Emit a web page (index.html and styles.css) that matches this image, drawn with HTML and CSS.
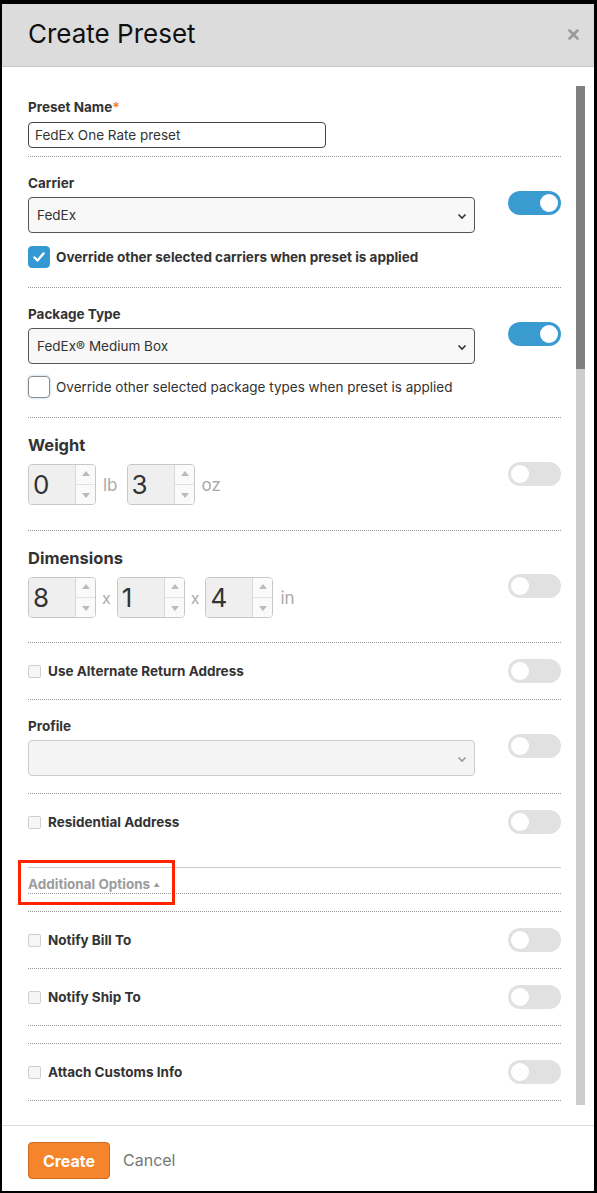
FILE: index.html
```html
<!DOCTYPE html>
<html lang="en">

<head>
    <meta charset="UTF-8">
    <title>Create Preset</title>
    <link rel="stylesheet" href="styles.css">
</head>

<body>
    <div class="modal">
        <div class="modal_head">
            <h1>Create Preset</h1>
            <svg class="close" width="11" height="11" viewBox="0 0 11 11">
                <path d="M1.5 1.5 L9.5 9.5 M9.5 1.5 L1.5 9.5" stroke="#9a9a9a" stroke-width="2.6" stroke-linecap="round" />
            </svg>
        </div>

        <div class="modal_body">
            <div class="form">
                <!-- preset name -->
                <div class="row first">
                    <div class="main">
                        <div class="label">Preset Name<span class="req">*</span></div>
                        <input type="text" class="text_in" value="FedEx One Rate preset">
                    </div>
                </div>

                <!-- carrier -->
                <div class="row">
                    <div class="main">
                        <div class="label">Carrier</div>
                        <div class="select">
                            <span>FedEx</span>
                            <svg width="10" height="7" viewBox="0 0 10 7"><path d="M1.5 1.5 L5 5 L8.5 1.5" fill="none" stroke="#333" stroke-width="1.6" /></svg>
                        </div>
                        <div class="check_row">
                            <span class="cb big checked">
                                <svg width="22" height="22" viewBox="0 0 22 22"><path d="M6.5 11.5 L9.5 14.5 L15.5 7.5" fill="none" stroke="#fff" stroke-width="2.4" stroke-linecap="round" stroke-linejoin="round" /></svg>
                            </span>
                            <span class="cb_text bold">Override other selected carriers when preset is applied</span>
                        </div>
                    </div>
                    <span class="toggle on t16"><span class="knob"></span></span>
                </div>

                <!-- package type -->
                <div class="row">
                    <div class="main">
                        <div class="label">Package Type</div>
                        <div class="select pkg">
                            <span>FedEx® Medium Box</span>
                            <svg width="10" height="7" viewBox="0 0 10 7"><path d="M1.5 1.5 L5 5 L8.5 1.5" fill="none" stroke="#333" stroke-width="1.6" /></svg>
                        </div>
                        <div class="check_row">
                            <span class="cb big"></span>
                            <span class="cb_text">Override other selected package types when preset is applied</span>
                        </div>
                    </div>
                    <span class="toggle on t16"><span class="knob"></span></span>
                </div>

                <!-- weight -->
                <div class="row big_row">
                    <div class="main">
                        <div class="label big_label">Weight</div>
                        <div class="nums">
                            <div class="num">
                                <span class="num_val">0</span>
                                <span class="spin"><i class="up"></i><i class="down"></i></span>
                            </div>
                            <span class="unit">lb</span>
                            <div class="num">
                                <span class="num_val">3</span>
                                <span class="spin"><i class="up"></i><i class="down"></i></span>
                            </div>
                            <span class="unit">oz</span>
                        </div>
                    </div>
                    <span class="toggle t27"><span class="knob"></span></span>
                </div>

                <!-- dimensions -->
                <div class="row big_row">
                    <div class="main">
                        <div class="label big_label">Dimensions</div>
                        <div class="nums">
                            <div class="num">
                                <span class="num_val">8</span>
                                <span class="spin"><i class="up"></i><i class="down"></i></span>
                            </div>
                            <span class="unit by">x</span>
                            <div class="num">
                                <span class="num_val">1</span>
                                <span class="spin"><i class="up"></i><i class="down"></i></span>
                            </div>
                            <span class="unit by">x</span>
                            <div class="num">
                                <span class="num_val">4</span>
                                <span class="spin"><i class="up"></i><i class="down"></i></span>
                            </div>
                            <span class="unit">in</span>
                        </div>
                    </div>
                    <span class="toggle t26"><span class="knob"></span></span>
                </div>

                <div class="row simple">
                    <div class="main check_row">
                        <span class="cb small"></span>
                        <span class="cb_text bold">Use Alternate Return Address</span>
                    </div>
                    <span class="toggle"><span class="knob"></span></span>
                </div>

                <!-- profile -->
                <div class="row profile">
                    <div class="main">
                        <div class="label">Profile</div>
                        <div class="select off">
                            <span></span>
                            <svg width="10" height="7" viewBox="0 0 10 7"><path d="M1.5 1.5 L5 5 L8.5 1.5" fill="none" stroke="#999" stroke-width="1.6" /></svg>
                        </div>
                    </div>
                    <span class="toggle t16"><span class="knob"></span></span>
                </div>

                <div class="row simple last">
                    <div class="main check_row">
                        <span class="cb small"></span>
                        <span class="cb_text bold">Residential Address</span>
                    </div>
                    <span class="toggle"><span class="knob"></span></span>
                </div>

                <!-- collapsible extras -->
                <div class="more_head">
                    <span class="more_link">Additional Options <small>▲</small></span>
                    <span class="mark"></span>
                </div>
                <div class="spacer"></div>

                <div class="row simple">
                    <div class="main check_row">
                        <span class="cb small"></span>
                        <span class="cb_text bold">Notify Bill To</span>
                    </div>
                    <span class="toggle"><span class="knob"></span></span>
                </div>

                <div class="row simple">
                    <div class="main check_row">
                        <span class="cb small"></span>
                        <span class="cb_text bold">Notify Ship To</span>
                    </div>
                    <span class="toggle"><span class="knob"></span></span>
                </div>
                <div class="spacer"></div>

                <div class="row simple">
                    <div class="main check_row">
                        <span class="cb small"></span>
                        <span class="cb_text bold">Attach Customs Info</span>
                    </div>
                    <span class="toggle"><span class="knob"></span></span>
                </div>
            </div>
            <div class="scroll_track">
                <div class="scroll_thumb"></div>
            </div>
        </div>

        <div class="modal_foot">
            <button class="btn_create">Create</button>
            <span class="cancel">Cancel</span>
        </div>
    </div>
</body>

</html>
```

FILE: styles.css
```css
* {
    box-sizing: border-box;
}

body {
    margin: 0;
    font-family: Inter, "Liberation Sans", sans-serif;
    color: #333;
    background: #fff;
}

.modal {
    width: 597px;
    height: 1193px;
    border: solid #000;
    border-width: 4px 3px 2px 2px;
    display: flex;
    flex-direction: column;
    background: white;
}

.modal_head {
    flex: none;
    height: 63px;
    background: #dcdcdc;
    border-bottom: 1px solid #c9c9c9;
    display: flex;
    align-items: center;
    justify-content: space-between;
    padding: 0 15px 3px 26px;
}

.modal_head h1 {
    margin: 0;
    font-size: 26px;
    font-weight: 400;
    color: #111;
}

.close {
    margin-top: 1px;
}

.modal_body {
    flex: 1;
    min-height: 0;
    display: flex;
    padding: 19px 9px 20px 26px;
}

/* clip the list at the bottom but leave room on the left for the marker box */
.form {
    flex: 1;
    clip-path: inset(0 0 0 -20px);
}

.scroll_track {
    width: 9px;
    margin-left: 15px;
    background: #cdcdcd;
}

.scroll_thumb {
    height: 283px;
    background: #7f7f7f;
}

/* rows */
.row {
    display: flex;
    align-items: flex-start;
    gap: 33px;
    padding: 18px 0 19px;
    border-bottom: 1px dotted #999;
}

.row.first {
    padding: 13px 0 8px;
}

.row.big_row {
    padding: 17px 0 25px;
}

.row.big_row+.row.big_row {
    padding-bottom: 24px;
}

.row.profile {
    padding-bottom: 17px;
}

.row.simple {
    align-items: center;
    padding: 16px 0;
}

.row.last {
    border-bottom: 0;
    padding-bottom: 33px;
}

.main {
    flex: 1;
    min-width: 0;
}

.label {
    font-size: 13.5px;
    line-height: 16px;
    font-weight: 700;
    margin-bottom: 6px;
}

.first .label {
    margin-bottom: 7px;
}

.req {
    color: #f5832a;
}

.big_label {
    font-size: 16.5px;
    line-height: 20px;
    margin-bottom: 9px;
}

.text_in {
    display: block;
    width: 298px;
    height: 26px;
    border: 1px solid #444;
    border-radius: 4px;
    padding: 0 6px;
    font-family: inherit;
    font-size: 13.5px;
    color: #333;
    outline: none;
}

.select {
    height: 36px;
    border: 1px solid #555;
    border-radius: 4px;
    background: #f8f8f8;
    display: flex;
    align-items: center;
    justify-content: space-between;
    padding: 0 7px 0 8px;
    font-size: 13.5px;
    margin-bottom: 13px;
}

.select.pkg {
    margin-bottom: 12px;
}

.select svg {
    margin-top: 2px;
}

.select.off {
    border-color: #ccc;
    background: #f4f4f4;
    margin-bottom: 0;
}

.check_row {
    display: flex;
    align-items: center;
    height: 22px;
}

.row.simple .check_row {
    height: 16px;
}

.cb {
    flex: none;
    display: inline-block;
}

.cb.big {
    width: 22px;
    height: 22px;
    border: 1px solid #8a8a8a;
    border-radius: 4px;
    box-shadow: 0 0 2px 1px #dbe6f2;
    margin-right: 6px;
}

.cb.big.checked {
    border-color: #3499d3;
    background: #3499d3;
    box-shadow: none;
}

.cb.big.checked svg {
    display: block;
    margin: -1px;
}

.cb.small {
    width: 13px;
    height: 13px;
    border: 1px solid #cfcfcf;
    border-radius: 2px;
    background: #f6f6f6;
    margin-right: 7px;
}

.cb_text {
    font-size: 13.5px;
    white-space: nowrap;
}

.cb_text.bold {
    font-weight: 700;
}

/* number inputs with spinners */
.nums {
    display: flex;
    align-items: center;
}

.num {
    display: flex;
    width: 68px;
    height: 41px;
    border: 1px solid #c8c8c8;
    border-radius: 4px;
    overflow: hidden;
}

.num_val {
    width: 46px;
    background: #efefef;
    font-size: 26px;
    line-height: 39px;
    padding-left: 4px;
    color: #333;
}

.spin {
    flex: 1;
    border-left: 1px solid #d8d8d8;
    background: #fafafa;
    display: flex;
    flex-direction: column;
}

.spin i {
    flex: 1;
    position: relative;
}

.spin i.up {
    border-bottom: 1px solid #e3e3e3;
}

.spin i::after {
    content: "";
    position: absolute;
    left: 6px;
    border-left: 4px solid transparent;
    border-right: 4px solid transparent;
}

.spin i.up::after {
    top: 6px;
    border-bottom: 5px solid #bbb;
}

.spin i.down::after {
    top: 8px;
    border-top: 5px solid #bbb;
}

.unit {
    font-size: 17px;
    color: #aaa;
    margin: 0 9px 0 7px;
}

.unit.by {
    font-size: 16px;
    margin: 0 6px;
}

/* switches */
.toggle {
    flex: none;
    width: 53px;
    height: 24px;
    border-radius: 12px;
    background: #e1e1e1;
    padding: 3px;
    display: flex;
}

.toggle.on {
    background: #3a9bd1;
    justify-content: flex-end;
}

.knob {
    width: 18px;
    height: 18px;
    border-radius: 50%;
    background: white;
}

.t16 {
    margin-top: 16px;
}

.t27 {
    margin-top: 27px;
}

.t26 {
    margin-top: 26px;
}

/* additional options */
.more_head {
    position: relative;
    border-top: 1px solid #ccc;
    border-bottom: 1px dotted #999;
    padding: 8px 0 1px;
    font-size: 13.5px;
    line-height: 16px;
    height: 27px;
}

.more_link {
    font-weight: 700;
    color: #9c9c9c;
}

.more_link small {
    font-size: 6px;
    vertical-align: 2px;
}

.mark {
    position: absolute;
    left: -10px;
    top: -8px;
    width: 157px;
    height: 45px;
    border: 3px solid #ff2400;
}

.spacer {
    height: 18px;
    border-bottom: 1px dotted #999;
}

/* footer */
.modal_foot {
    flex: none;
    height: 66px;
    border-top: 1px solid #dcdcdc;
    padding: 16px 26px 0;
    display: flex;
    align-items: flex-start;
}

.btn_create {
    width: 82px;
    height: 37px;
    background: #f5842b;
    border: 1px solid #cf6a1e;
    border-radius: 4px;
    color: white;
    font-family: inherit;
    font-size: 16px;
    font-weight: 700;
}

.cancel {
    margin-left: 13px;
    font-size: 16px;
    line-height: 37px;
    color: #777;
}
```
